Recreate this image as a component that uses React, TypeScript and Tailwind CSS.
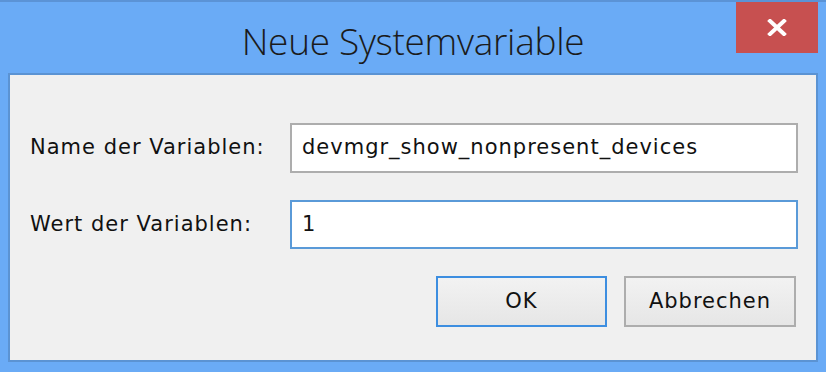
const ui = { fontFamily: '"DejaVu Sans", sans-serif' }

export default function App() {
  return (
    <div
      className="w-[826px] h-[372px] bg-[#6aabf6] border-t-2 border-[#5b93d6] flex flex-col"
      style={{ fontFamily: '"Open Sans", "Noto Sans", sans-serif' }}
    >
      {/* Title bar */}
      <div className="relative h-[71px] flex items-center justify-center">
        <span className="text-[37px] font-light text-[#1b1b1b] tracking-[-0.3px] mt-[6px]">
          Neue Systemvariable
        </span>
        <button className="absolute top-0 right-[8px] w-[82px] h-[51px] bg-[#c75050] flex items-center justify-center">
          <svg width="20" height="17" viewBox="0 0 20 17">
            <path d="M3 2 L17 15 M17 2 L3 15" stroke="white" strokeWidth="4" strokeLinecap="square" />
          </svg>
        </button>
      </div>

      {/* Panel */}
      <div className="mx-[8px] h-[289px] border-2 border-[#5b93d3] bg-[#f0f0f0] pt-[48px] pl-[20px] pr-[18px]">
        <div className="flex items-center">
          <label className="w-[260px] text-[21px] tracking-[1px] text-[#111]" style={ui}>
            Name der Variablen:
          </label>
          <div className="w-[508px] h-[50px] border-2 border-[#adadad] bg-white flex items-center px-[10px] text-[21px] tracking-[1px] text-[#111]" style={ui}>
            devmgr_show_nonpresent_devices
          </div>
        </div>
        <div className="flex items-center mt-[27px]">
          <label className="w-[260px] text-[21px] tracking-[1px] text-[#111]" style={ui}>
            Wert der Variablen:
          </label>
          <div className="w-[508px] h-[49px] border-2 border-[#5a9ad8] bg-white flex items-center px-[10px] text-[21px] text-[#111]" style={ui}>
            1
          </div>
        </div>
        <div className="flex justify-end gap-[17px] mt-[27px] pr-[2px]">
          <button className="w-[171px] h-[51px] border-2 border-[#3d8ee0] bg-gradient-to-b from-[#f2f2f2] to-[#e6e6e6] text-[21px] tracking-[1px] text-[#111]" style={ui}>
            OK
          </button>
          <button className="w-[172px] h-[51px] border-2 border-[#adadad] bg-gradient-to-b from-[#f2f2f2] to-[#e6e6e6] text-[21px] tracking-[1px] text-[#111]" style={ui}>
            Abbrechen
          </button>
        </div>
      </div>
    </div>
  )
}
